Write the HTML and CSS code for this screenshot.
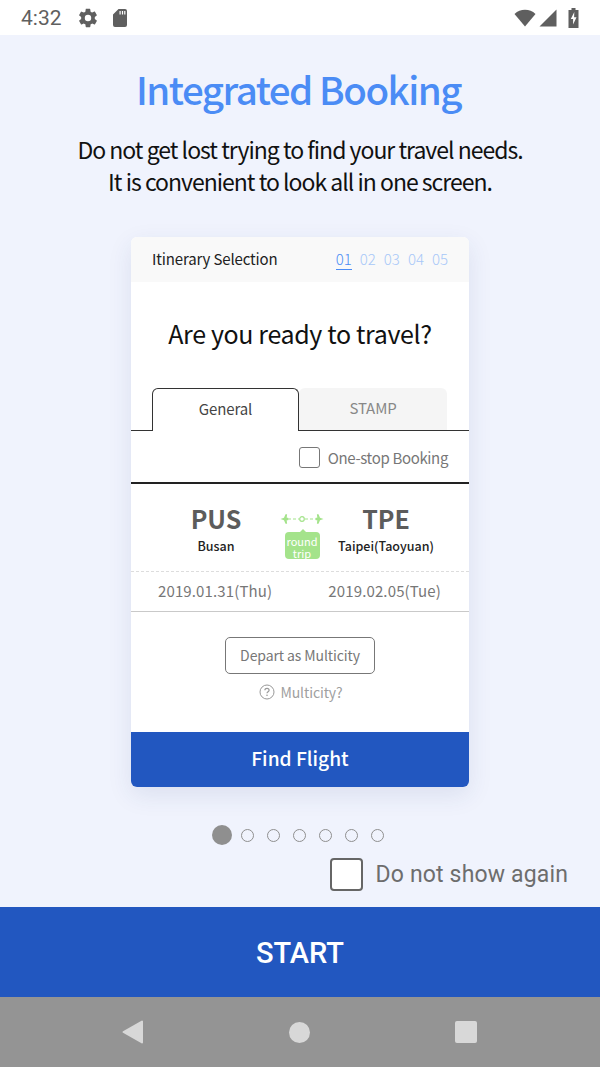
FILE: index.html
```html
<!DOCTYPE html>
<html lang="en">
<head>
<meta charset="UTF-8">
<meta name="viewport" content="width=device-width, initial-scale=1.0">
<title>Integrated Booking</title>
<link rel="stylesheet" href="styles.css">
</head>
<body>
  <div class="status-bar">
    <span class="status-time">4:32</span>
    <svg class="status-gear" width="22" height="22" viewBox="0 0 24 24"><path fill="#5f5f5f" d="M19.4 13c.04-.32.07-.66.07-1s-.03-.68-.07-1l2.1-1.65c.19-.15.24-.42.12-.64l-2-3.46c-.12-.22-.39-.3-.61-.22l-2.49 1c-.52-.4-1.08-.73-1.69-.98l-.38-2.65A.49.49 0 0 0 14 2h-4c-.25 0-.46.18-.49.42l-.38 2.65c-.61.25-1.17.59-1.69.98l-2.49-1a.5.5 0 0 0-.61.22l-2 3.46c-.13.22-.07.49.12.64L4.57 11c-.04.32-.07.66-.07 1s.03.68.07 1l-2.11 1.65c-.19.15-.24.42-.12.64l2 3.46c.12.22.39.3.61.22l2.49-1c.52.4 1.08.73 1.69.98l.38 2.65c.03.24.24.42.49.42h4c.25 0 .46-.18.49-.42l.38-2.65c.61-.25 1.17-.59 1.69-.98l2.49 1c.23.09.49 0 .61-.22l2-3.46c.12-.22.07-.49-.12-.64L19.4 13zM12 15.5a3.5 3.5 0 1 1 0-7 3.5 3.5 0 0 1 0 7z"/></svg>
    <svg class="status-sd" width="16" height="20" viewBox="0 0 16 20"><path fill="#5f5f5f" d="M6.5 1H13a2 2 0 0 1 2 2v14a2 2 0 0 1-2 2H3a2 2 0 0 1-2-2V6.5zM7.500 3v3.500h1.200V3zm2.400 0v3.500h1.200V3zm2.300 0v3.500h1.200V3z"/></svg>
    <span class="status-space"></span>
    <svg width="22" height="18" viewBox="0 0 22 18"><path fill="#5f5f5f" d="M11 17.500.5 5C3.500 2.200 7 .8 11 .8S18.500 2.200 21.500 5z"/></svg>
    <svg class="status-signal" width="18" height="18" viewBox="0 0 18 18"><path fill="#5f5f5f" d="M17.500.5v17H.5z"/></svg>
    <svg class="status-battery" width="11" height="20" viewBox="0 0 11 20"><path fill="#5f5f5f" d="M3.500 0h4v2h3v18H.5V2h3z"/><path fill="#fff" d="M6.300 4 2.800 11h2.300v5.500l3.400-7.200H6.100z"/></svg>
  </div>

  <div class="guide">
    <h1 class="guide-title">Integrated Booking</h1>
    <p class="guide-text">Do not get lost trying to find your travel needs.<br>It is convenient to look all in one screen.</p>

    <div class="card">
      <div class="card-head">
        <span class="card-head-title">Itinerary Selection</span>
        <span class="steps"><span class="step step-on">01</span><span class="step">02</span><span class="step">03</span><span class="step">04</span><span class="step">05</span></span>
      </div>
      <div class="card-question">Are you ready to travel?</div>
      <div class="tabs">
        <div class="tab tab-on">General</div>
        <div class="tab">STAMP</div>
      </div>
      <div class="onestop">
        <span class="onestop-box"></span>
        <span class="onestop-label">One-stop Booking</span>
      </div>
      <div class="route">
        <div class="city">
          <div class="city-code">PUS</div>
          <div class="city-name">Busan</div>
        </div>
        <div class="trip">
          <svg width="46" height="12" viewBox="0 0 46 12">
            <path fill="none" stroke="#a4e38b" stroke-width="1.200" stroke-dasharray="3 2" d="M9 6h11M26 6h11"/>
            <circle cx="23" cy="6" r="2.300" fill="none" stroke="#a4e38b" stroke-width="1.200"/>
            <path fill="#a4e38b" d="M1.500 6 5 4.800l1.500-3.600h1.600l-.4 3.600h1.500v2.400H7.700l.4 3.600H6.500L5 7.200zM44.500 6 41 4.800l-1.500-3.600h-1.600l.4 3.600h-1.500v2.400h1.500l-.4 3.600h1.600L41 7.200z"/>
          </svg>
          <div class="trip-badge">round<br>trip</div>
        </div>
        <div class="city">
          <div class="city-code">TPE</div>
          <div class="city-name">Taipei(Taoyuan)</div>
        </div>
      </div>
      <div class="dates">
        <span class="date">2019.01.31(Thu)</span>
        <span class="date">2019.02.05(Tue)</span>
      </div>
      <div class="multi">
        <div class="multi-btn">Depart as Multicity</div>
        <div class="multi-help">
          <svg width="16" height="16" viewBox="0 0 16 16"><circle cx="8" cy="8" r="7" fill="none" stroke="#999"/><path fill="none" stroke="#999" stroke-width="1.200" d="M5.900 6.300C5.900 5 6.900 4.300 8 4.300s2.100.7 2.100 1.900c0 1.500-2.100 1.600-2.100 3.100"/><circle cx="8" cy="11.300" r=".8" fill="#999"/></svg>
          <span>Multicity?</span>
        </div>
      </div>
      <div class="find-btn">Find Flight</div>
    </div>

    <div class="dots">
      <span class="dot dot-on"></span>
      <span class="dot"></span>
      <span class="dot"></span>
      <span class="dot"></span>
      <span class="dot"></span>
      <span class="dot"></span>
      <span class="dot"></span>
    </div>
    <div class="again">
      <span class="again-box"></span>
      <span class="again-label">Do not show again</span>
    </div>
  </div>

  <div class="start-btn">START</div>

  <div class="nav-bar">
    <svg width="21" height="24" viewBox="0 0 21 24"><path fill="#d8d8d8" stroke="#d8d8d8" stroke-width="2" stroke-linejoin="round" d="M20 1.500v21L1.500 12z"/></svg>
    <svg width="21" height="21" viewBox="0 0 21 21"><circle cx="10.500" cy="10.500" r="10.500" fill="#d8d8d8"/></svg>
    <svg width="22" height="22" viewBox="0 0 22 22"><rect width="22" height="22" rx="2" fill="#d8d8d8"/></svg>
  </div>
</body>
</html>
```

FILE: styles.css
```css
* {
  box-sizing: border-box;
}

html,
body {
  margin: 0;
  padding: 0;
}

body {
  width: 600px;
  height: 1067px;
  display: flex;
  flex-direction: column;
  background-color: #f0f3fd;
  font-family: "Noto Sans CJK KR", "Noto Sans", sans-serif;
  overflow: hidden;
}

/* status bar */
.status-bar {
  height: 35px;
  flex: none;
  display: flex;
  align-items: center;
  padding: 0 21px 0 21px;
  background-color: #ffffff;
}

.status-time {
  font-family: Roboto, sans-serif;
  font-size: 21px;
  color: #5f5f5f;
  margin-right: 15px;
}

.status-sd {
  margin-left: 13px;
}

.status-space {
  flex: 1;
}

.status-signal {
  margin-left: 3px;
}

.status-battery {
  margin-left: 11px;
}

/* guide */
.guide {
  flex: 1;
  display: flex;
  flex-direction: column;
  align-items: center;
}

.guide-title {
  margin: 26px 3px 0 0;
  font-size: 38.5px;
  line-height: 54px;
  font-weight: 500;
  letter-spacing: -1.5px;
  color: #4b8cf5;
}

.guide-text {
  margin: 18px 0 0;
  font-size: 23px;
  line-height: 32px;
  letter-spacing: -1px;
  text-align: center;
  color: #111111;
}

.card {
  width: 338px;
  height: 550px;
  margin-top: 40px;
  display: flex;
  flex-direction: column;
  background-color: #ffffff;
  border-radius: 6px;
  box-shadow: 0 8px 24px rgba(40, 60, 120, 0.1);
  overflow: hidden;
}

.card-head {
  height: 45px;
  flex: none;
  display: flex;
  align-items: center;
  justify-content: space-between;
  padding: 0 21px 0 21px;
  background-color: #f9f9f9;
}

.card-head-title {
  margin-bottom: 2px;
  font-size: 15px;
  letter-spacing: -0.15px;
  color: #222222;
}

.steps {
  display: flex;
  gap: 8px;
}

.step {
  font-size: 15px;
  font-weight: 300;
  line-height: 20px;
  color: #a8c8f8;
}

.step-on {
  color: #4b8cf5;
  border-bottom: 1px solid #4b8cf5;
}

.card-question {
  margin-top: 31px;
  font-size: 25px;
  line-height: 40px;
  letter-spacing: -0.36px;
  text-align: center;
  color: #111111;
}

.tabs {
  margin-top: 35px;
  height: 43px;
  flex: none;
  display: flex;
  padding-left: 21px;
  border-bottom: 1px solid #333333;
}

.tab {
  width: 148px;
  height: 42px;
  display: flex;
  align-items: center;
  justify-content: center;
  padding-bottom: 3px;
  font-size: 15px;
  letter-spacing: -0.1px;
  color: #888888;
  background-color: #f5f5f5;
  border-radius: 6px 6px 0 0;
}

.tab-on {
  width: 147px;
  height: 43px;
  color: #444444;
  background-color: #ffffff;
  border: 1px solid #333333;
  border-bottom: none;
}

.onestop {
  height: 53px;
  flex: none;
  display: flex;
  align-items: center;
  justify-content: flex-end;
  gap: 8px;
  padding: 2px 21px 0 0;
  border-bottom: 2px solid #222222;
}

.onestop-box {
  width: 21px;
  height: 21px;
  border: 1.5px solid #777777;
  border-radius: 3px;
}

.onestop-label {
  font-size: 15px;
  letter-spacing: -0.35px;
  color: #777777;
}

.route {
  height: 88px;
  flex: none;
  display: grid;
  grid-template-columns: 124px 46px 124px;
  padding: 0 21px 0 23px;
  border-bottom: 1px dashed #dddddd;
}

.city {
  padding-top: 15px;
  text-align: center;
}

.city-code {
  font-size: 25px;
  line-height: 38px;
  font-weight: 700;
  color: #5c5c5c;
}

.city-name {
  font-size: 12.5px;
  line-height: 18px;
  font-weight: 500;
  color: #222222;
}

.trip {
  padding: 29px 0 0 2px;
  display: flex;
  flex-direction: column;
  align-items: center;
}

.trip-badge {
  position: relative;
  flex: none;
  width: 35px;
  height: 27px;
  margin-top: 7px;
  border-radius: 4px;
  background-color: #a4e38b;
  color: #ffffff;
  font-size: 11px;
  line-height: 12px;
  text-align: center;
  padding-top: 3px;
}

.trip-badge::before {
  content: "";
  position: absolute;
  left: 15px;
  top: -3px;
  border-left: 3px solid transparent;
  border-right: 3px solid transparent;
  border-bottom: 3px solid #a4e38b;
}

.dates {
  height: 40px;
  flex: none;
  display: flex;
  justify-content: space-between;
  align-items: center;
  padding: 0 28px 3px 27px;
  border-bottom: 1px solid #c9c9c9;
}

.date {
  font-size: 15px;
  letter-spacing: 0.13px;
  color: #777777;
}

.multi {
  flex: 1;
  display: flex;
  flex-direction: column;
  align-items: center;
  padding-top: 25px;
}

.multi-btn {
  width: 150px;
  height: 37px;
  display: flex;
  align-items: center;
  justify-content: center;
  padding-bottom: 1px;
  font-size: 14px;
  letter-spacing: -0.1px;
  color: #777777;
  border: 1px solid #777777;
  border-radius: 5px;
}

.multi-help {
  margin: 8px 0 0 2px;
  display: flex;
  align-items: center;
  gap: 5px;
  font-size: 14px;
  letter-spacing: -0.1px;
  line-height: 20px;
  color: #a0a0a0;
}

.find-btn {
  height: 55px;
  flex: none;
  display: flex;
  align-items: center;
  justify-content: center;
  padding-bottom: 3px;
  background-color: #2257c0;
  color: #ffffff;
  font-size: 19.2px;
  font-weight: 500;
}

.dots {
  margin-top: 38px;
  height: 20px;
  padding-right: 4px;
  display: flex;
  align-items: center;
  gap: 13px;
}

.dot {
  width: 13px;
  height: 13px;
  border: 1.5px solid #8f8f8f;
  border-radius: 50%;
}

.dot-on {
  width: 20px;
  height: 20px;
  margin-right: -4px;
  background-color: #8f8f8f;
  border: none;
}

.again {
  align-self: flex-end;
  margin-top: 13px;
  padding-right: 32px;
  display: flex;
  align-items: center;
  gap: 13px;
}

.again-box {
  width: 33px;
  height: 33px;
  background-color: #ffffff;
  border: 2px solid #666666;
  border-radius: 4px;
}

.again-label {
  font-family: Roboto, sans-serif;
  font-size: 23px;
  letter-spacing: 0.15px;
  color: #6d6d6d;
}

/* bottom */
.start-btn {
  height: 90px;
  flex: none;
  display: flex;
  align-items: center;
  justify-content: center;
  padding-top: 2px;
  background-color: #2257c0;
  color: #ffffff;
  font-family: Roboto, sans-serif;
  font-size: 29px;
  font-weight: 500;
}

.nav-bar {
  height: 70px;
  flex: none;
  display: flex;
  align-items: center;
  justify-content: space-between;
  padding: 0 123px 0 122px;
  background-color: #949494;
}
```
